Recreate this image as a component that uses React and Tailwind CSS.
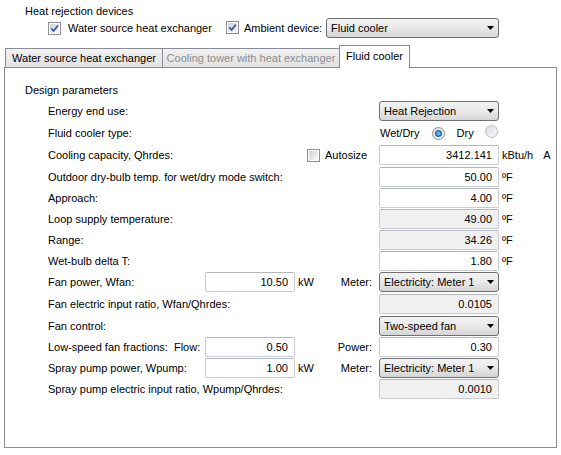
import React from "react";

const ROW_H = [22, 22, 22, 21, 21, 21, 21, 21, 22, 22, 21, 21, 21, 22];

function Check({ checked }) {
  return (
    <span className="inline-flex h-[13px] w-[13px] shrink-0 border border-[#8f8f8f] bg-white p-px">
      <span className="flex h-full w-full items-center justify-center bg-linear-to-br from-[#cfd3d9] to-[#f8f8f8]">
        {checked && (
          <svg width="9" height="9" viewBox="0 0 9 9">
            <path d="M1.2 4.4 L3.6 6.9 L7.9 1.6" fill="none" stroke="#3f5aa0" strokeWidth="1.7" />
          </svg>
        )}
      </span>
    </span>
  );
}

function Radio({ on }) {
  return (
    <span
      className={`inline-flex h-[13px] w-[13px] shrink-0 items-center justify-center rounded-full border ${
        on ? "border-[#8a8f96]" : "border-[#b9bcc1]"
      } bg-linear-to-br from-[#d9dce1] to-[#fafafa]`}
    >
      {on && <span className="h-[7px] w-[7px] rounded-full bg-radial from-[#8fd0f8] via-[#2a7fc0] to-[#0d3f73]" />}
    </span>
  );
}

function Select({ value, className = "" }) {
  return (
    <div
      className={`flex h-[20px] items-center justify-between rounded-[3px] border border-[#707070] bg-linear-to-b from-[#f3f3f3] via-[#e9e9e9] to-[#d5d5d5] pl-[4px] pr-[4px] ${className}`}
    >
      <span>{value}</span>
      <svg width="7" height="4" viewBox="0 0 7 4">
        <path d="M0 0h7L3.5 4z" fill="#000" />
      </svg>
    </div>
  );
}

function Field({ value, ro, className = "" }) {
  return (
    <div
      className={`flex h-[20px] items-center justify-end rounded-[2px] border border-[#c9cdd3] border-t-[#b4b8be] pr-[6px] ${
        ro ? "bg-[#f0f0f0]" : "bg-white"
      } ${className}`}
    >
      {value}
    </div>
  );
}

function Row({ h, children }) {
  return (
    <div
      className="grid grid-cols-[157px_90px_84px_120px_1fr] items-center"
      style={{ height: h }}
    >
      {children}
    </div>
  );
}

export default function App() {
  return (
    <div className="h-[455px] w-[561px] overflow-hidden bg-white pt-[4px] font-['Liberation_Sans',Arial,sans-serif] text-[11px] leading-[14px] text-black">
      <div className="pl-[25px]">Heat rejection devices</div>

      {/* device toggles */}
      <div className="flex h-[20px] w-[499px] items-center pl-[48px]">
        <Check checked />
        <span className="ml-[7px]">Water source heat exchanger</span>
        <span className="ml-[14px]">
          <Check checked />
        </span>
        <span className="ml-[5px]">Ambient device:</span>
        <Select value="Fluid cooler" className="ml-auto w-[173px]" />
      </div>

      {/* tab strip */}
      <div className="mt-[7px] flex h-[22px] items-end pl-[5px]">
        <div className="flex h-[19px] w-[158px] items-center justify-center border border-b-0 border-[#898c95] bg-linear-to-b from-[#f2f2f2] to-[#e1e1e1]">
          Water source heat exchanger
        </div>
        <div className="flex h-[19px] w-[177px] items-center justify-center border border-b-0 border-l-0 border-[#898c95] bg-linear-to-b from-[#f2f2f2] to-[#e1e1e1] text-[#8d8d8d]">
          Cooling tower with heat exchanger
        </div>
        <div className="relative z-10 -mb-px -ml-px flex h-[23px] w-[71px] items-center justify-center border border-b-0 border-[#898c95] bg-white pb-[2px]">
          Fluid cooler
        </div>
      </div>

      {/* panel */}
      <div className="mx-[4px] h-[381px] border border-[#898c95] pt-[15px]">
        <div className="pl-[20px]">Design parameters</div>

        <div className="mt-[3px] pl-[43px]">
          <Row h={ROW_H[0]}>
            <span className="col-span-3">Energy end use:</span>
            <Select value="Heat Rejection" />
          </Row>

          <Row h={ROW_H[1]}>
            <span className="col-span-3">Fluid cooler type:</span>
            <div className="flex items-center pl-[1px]">
              <span>Wet/Dry</span>
              <span className="ml-[12px]">
                <Radio on />
              </span>
              <span className="ml-[12px]">Dry</span>
              <span className="ml-auto mr-[1px]">
                <Radio />
              </span>
            </div>
          </Row>

          <Row h={ROW_H[2]}>
            <span className="col-span-2">Cooling capacity, Qhrdes:</span>
            <div className="flex items-center pl-[12px]">
              <Check />
              <span className="ml-[5px]">Autosize</span>
            </div>
            <Field value="3412.141" />
            <div className="flex gap-[10px] pl-[3px]">
              <span>kBtu/h</span>
              <span>A</span>
            </div>
          </Row>

          <Row h={ROW_H[3]}>
            <span className="col-span-3">Outdoor dry-bulb temp. for wet/dry mode switch:</span>
            <Field value="50.00" />
            <span className="pl-[3px]">ºF</span>
          </Row>

          <Row h={ROW_H[4]}>
            <span className="col-span-3">Approach:</span>
            <Field value="4.00" />
            <span className="pl-[3px]">ºF</span>
          </Row>

          <Row h={ROW_H[5]}>
            <span className="col-span-3">Loop supply temperature:</span>
            <Field value="49.00" ro />
            <span className="pl-[3px]">ºF</span>
          </Row>

          <Row h={ROW_H[6]}>
            <span className="col-span-3">Range:</span>
            <Field value="34.26" ro />
            <span className="pl-[3px]">ºF</span>
          </Row>

          <Row h={ROW_H[7]}>
            <span className="col-span-3">Wet-bulb delta T:</span>
            <Field value="1.80" />
            <span className="pl-[3px]">ºF</span>
          </Row>

          <Row h={ROW_H[8]}>
            <span>Fan power, Wfan:</span>
            <Field value="10.50" />
            <div className="flex justify-between pl-[3px] pr-[7px]">
              <span>kW</span>
              <span>Meter:</span>
            </div>
            <Select value="Electricity: Meter 1" />
          </Row>

          <Row h={ROW_H[9]}>
            <span className="col-span-3">Fan electric input ratio, Wfan/Qhrdes:</span>
            <Field value="0.0105" ro />
          </Row>

          <Row h={ROW_H[10]}>
            <span className="col-span-3">Fan control:</span>
            <Select value="Two-speed fan" />
          </Row>

          <Row h={ROW_H[11]}>
            <span className="whitespace-pre">Low-speed fan fractions:  Flow:</span>
            <Field value="0.50" />
            <span className="pr-[7px] text-right">Power:</span>
            <Field value="0.30" />
          </Row>

          <Row h={ROW_H[12]}>
            <span>Spray pump power, Wpump:</span>
            <Field value="1.00" />
            <div className="flex justify-between pl-[3px] pr-[7px]">
              <span>kW</span>
              <span>Meter:</span>
            </div>
            <Select value="Electricity: Meter 1" />
          </Row>

          <Row h={ROW_H[13]}>
            <span className="col-span-3">Spray pump electric input ratio, Wpump/Qhrdes:</span>
            <Field value="0.0010" ro />
          </Row>
        </div>
      </div>
    </div>
  );
}
